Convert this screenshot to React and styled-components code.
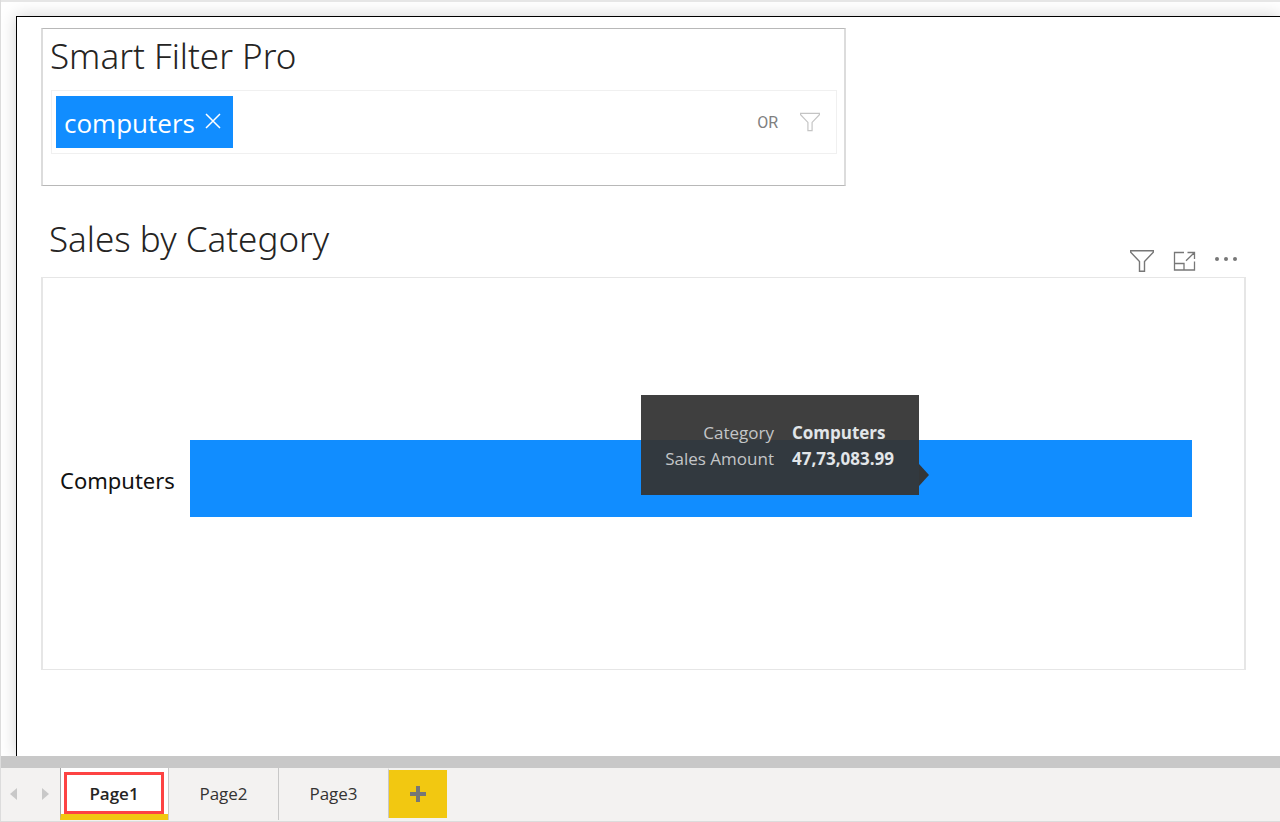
import React from "react";
import styled, { createGlobalStyle } from "styled-components";

const GlobalStyle = createGlobalStyle`
  *, *::before, *::after { box-sizing: border-box; }
  body {
    margin: 0;
    background: #ffffff;
    color: #252423;
    font-family: "Segoe UI", "Open Sans", "Noto Sans", sans-serif;
  }
  button { font: inherit; color: inherit; padding: 0; border: 0; background: none; cursor: pointer; }
  h2 { margin: 0; font-weight: 400; }
  svg { display: block; }
`;

const Shell = styled.div`
  display: flex;
  flex-direction: column;
  min-height: 100vh;
  border-left: 1px solid #dcdcdc;
  border-bottom: 1px solid #dcdcdc;
`;

const Workspace = styled.main`
  flex: 1;
  display: flex;
  padding: 14px 0 0 15px;
  border-top: 2px solid #e6e6e6;
  overflow: hidden;
`;

const Canvas = styled.div`
  flex: 1;
  min-width: 0;
  padding: 11px 34px 0 24px;
  border-top: 1px solid #000000;
  border-left: 1px solid #000000;
  background: #ffffff;
  box-shadow: 0 0 16px rgba(0, 0, 0, 0.18);
`;

const Title = styled.h2`
  font-family: "Segoe UI", "Noto Sans", sans-serif;
  font-size: 35px;
  font-weight: 300;
  line-height: 48px;
  white-space: nowrap;
`;

const FilterCard = styled.section`
  max-width: 805px;
  height: 158px;
  padding: 3px 7px 4px;
  border: 1px solid #b8b8b8;
  border-width: 1px 2px;
  border-color: #b8b8b8 #dcdcdc;
`;

const FilterField = styled.div`
  display: flex;
  align-items: center;
  height: 64px;
  margin: 10px 0 0 1px;
  padding: 0 16px 0 4px;
  border: 1px solid #f0f0f0;
`;

const Chip = styled.span`
  display: flex;
  align-items: center;
  gap: 10px;
  height: 52px;
  padding: 0 12px 0 8px;
  background: #118dff;
  color: #ffffff;
  font-size: 26px;
  line-height: 52px;
`;

const ChipText = styled.span`
  padding-top: 2px;
  line-height: 50px;
`;

const ModeButton = styled.button`
  margin-left: auto;
  margin-right: 22px;
  padding-top: 2px;
  color: #808080;
  font-family: Roboto, sans-serif;
  font-size: 16px;
  line-height: 24px;
`;

const IconButton = styled.button`
  display: flex;
  align-items: center;
  justify-content: center;
  color: ${({ $color }) => $color || "#777777"};
`;

const ChartSection = styled.section`
  margin-top: 29px;
`;

const ChartHeader = styled.header`
  display: flex;
  justify-content: space-between;
  align-items: flex-end;
  height: 62px;
  padding: 0 8px 0 8px;
`;

const ChartTitle = styled(Title)`
  align-self: flex-start;
`;

const Toolbar = styled.div`
  display: flex;
  align-items: center;
  gap: 18px;
  padding-bottom: 4px;
`;

const Plot = styled.div`
  display: flex;
  align-items: center;
  height: 393px;
  padding: 10px 52px 0 17px;
  border: 1px solid #e6e6e6;
  border-width: 1px 2px;
`;

const AxisLabel = styled.span`
  width: 130px;
  padding-top: 2px;
  color: #111111;
  font-family: "Segoe UI", "Noto Sans", sans-serif;
  font-size: 22px;
  line-height: 32px;
`;

const Bar = styled.div`
  position: relative;
  flex: 1;
  height: 77px;
  background: #118dff;
`;

const Tooltip = styled.div`
  position: absolute;
  top: -45px;
  right: 273px;
  height: 100px;
  padding: 25px 25px 23px 24px;
  background: rgba(53, 53, 53, 0.95);

  &::after {
    content: "";
    position: absolute;
    top: 69px;
    left: 100%;
    border: solid transparent;
    border-width: 11px 0 11px 10px;
    border-left-color: #333638;
  }
`;

const TooltipTable = styled.table`
  border-collapse: collapse;
  font-size: 17px;
  line-height: 26px;
  white-space: nowrap;

  th {
    padding: 0 18px 0 0;
    color: #c4c6c8;
    font-weight: 400;
    text-align: right;
  }
  td {
    padding: 0;
    color: #e2e6e9;
    font-weight: 700;
  }
`;

const ScrollTrack = styled.div`
  height: 12px;
  background: #c8c8c8;
`;

const PageBar = styled.nav`
  display: flex;
  height: 53px;
  background: #f3f2f1;
`;

const Pager = styled.div`
  display: flex;
  align-items: center;
  justify-content: space-between;
  width: 59px;
  padding: 0 10px 2px 8px;
`;

const PageTab = styled.button`
  width: 110px;
  height: 52px;
  border-left: 1px solid #c8c8c8;
  color: #333333;
  font-size: 17px;
  line-height: 52px;
`;

const ActiveTab = styled(PageTab)`
  width: 108px;
  padding: 4px 4px 0 3px;
  border-left-color: #a6a6a6;
  border-bottom: 6px solid #f2c811;
  background: #ffffff;
  color: #252423;
  font-weight: 600;
`;

const Highlight = styled.span`
  display: block;
  height: 42px;
  border: 3px solid #fd4343;
  line-height: 38px;
`;

const AddPage = styled.button`
  display: flex;
  align-items: center;
  justify-content: center;
  width: 59px;
  height: 50px;
  border-top: 2px solid #f3f2f1;
  border-left: 1px solid #c8c8c8;
  background: #f2c811;
`;

const Funnel = ({ size }) => (
  <svg width={size} height={size} viewBox="0 0 24 24" fill="none" stroke="currentColor" strokeWidth="1.4">
    <path d="M.7 1.7h22.6v1.5L14.5 12.5v9.8H9.5v-9.8L.7 3.2z" />
  </svg>
);

const FocusIcon = () => (
  <svg width="24" height="24" viewBox="0 0 24 24" fill="none" stroke="currentColor" strokeWidth="1.3">
    <path d="M12 3.5H2.5v17.5h20V12.5M2.5 14.5h9.5v6.5M15.5 3.5h7V10M22.2 3.8L14 11.8" />
  </svg>
);

const MoreIcon = () => (
  <svg width="24" height="24" viewBox="0 0 24 24" fill="currentColor">
    <circle cx="3" cy="10" r="2" />
    <circle cx="12" cy="10" r="2" />
    <circle cx="21" cy="10" r="2" />
  </svg>
);

const CloseIcon = () => (
  <svg width="16" height="18" viewBox="0 0 16 18" fill="none" stroke="currentColor" strokeWidth="1.5">
    <path d="M1 1l14 14M15 1L1 15" />
  </svg>
);

const Arrow = ({ left }) => (
  <svg width="8" height="14" viewBox="0 0 8 14" fill="#c8c8c8">
    <path d={left ? "M8 1v12L1 7z" : "M0 1v12l7-6z"} />
  </svg>
);

const PlusIcon = () => (
  <svg width="18" height="18" viewBox="0 0 18 18" fill="#777777">
    <path d="M7 1h4v6h6v4h-6v6H7v-6H1V7h6z" />
  </svg>
);

export default function App() {
  return (
    <>
      <GlobalStyle />
      <Shell>
        <Workspace>
          <Canvas>
            <FilterCard>
              <Title>Smart Filter Pro</Title>
              <FilterField>
                <Chip>
                  <ChipText>computers</ChipText>
                  <IconButton $color="#ffffff" aria-label="Remove computers"><CloseIcon /></IconButton>
                </Chip>
                <ModeButton>OR</ModeButton>
                <IconButton $color="#c4c4c4" aria-label="Filter"><Funnel size={20} /></IconButton>
              </FilterField>
            </FilterCard>
            <ChartSection>
              <ChartHeader>
                <ChartTitle>Sales by Category</ChartTitle>
                <Toolbar>
                  <IconButton aria-label="Filters"><Funnel size={24} /></IconButton>
                  <IconButton aria-label="Focus mode"><FocusIcon /></IconButton>
                  <IconButton aria-label="More options"><MoreIcon /></IconButton>
                </Toolbar>
              </ChartHeader>
              <Plot>
                <AxisLabel>Computers</AxisLabel>
                <Bar>
                  <Tooltip role="tooltip">
                    <TooltipTable>
                      <tbody>
                        <tr><th scope="row">Category</th><td>Computers</td></tr>
                        <tr><th scope="row">Sales Amount</th><td>47,73,083.99</td></tr>
                      </tbody>
                    </TooltipTable>
                  </Tooltip>
                </Bar>
              </Plot>
            </ChartSection>
          </Canvas>
        </Workspace>
        <ScrollTrack />
        <PageBar aria-label="Report pages">
          <Pager>
            <IconButton aria-label="Previous page"><Arrow left /></IconButton>
            <IconButton aria-label="Next page"><Arrow /></IconButton>
          </Pager>
          <ActiveTab aria-current="page"><Highlight>Page1</Highlight></ActiveTab>
          <PageTab>Page2</PageTab>
          <PageTab>Page3</PageTab>
          <AddPage aria-label="Add page"><PlusIcon /></AddPage>
        </PageBar>
      </Shell>
    </>
  );
}
